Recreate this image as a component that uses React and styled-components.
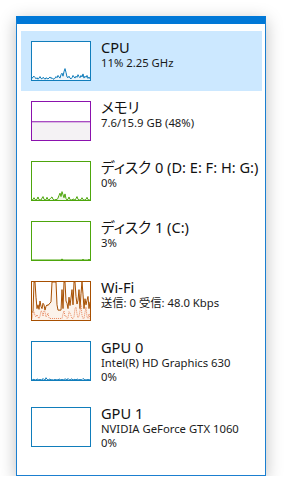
import styled, { createGlobalStyle } from 'styled-components';

const GlobalStyle = createGlobalStyle`
    html, body {
        margin: 0;
        padding: 0;
        background: #ffffff;
    }
    body {
        font-family: "Noto Sans", "Noto Sans CJK JP", sans-serif;
        font-feature-settings: "palt";
        color: #000;
    }
`

const Window = styled.div`
    margin: 16px 0 0 16px;
    width: 241px;
    border: 1px solid #1b7fd0;
    border-top: 8px solid #0078d7;
    background: #fff;
    box-shadow: 0 4px 16px rgba(0, 0, 0, 0.26);
    padding: 7px 3px 12px 4px;
`

const List = styled.div`
    display: flex;
    flex-direction: column;
`

const Row = styled.div`
    display: flex;
    align-items: flex-start;
    gap: 10px;
    padding: 10px;
    min-height: 40px;
    background: ${props => props.active ? '#cce8ff' : 'transparent'};
`

const GraphBox = styled.div`
    flex: none;
    width: 58px;
    height: 38px;
    border: 1px solid ${props => props.color};
    background: #fff;
    svg {
        display: block;
    }
`

const Info = styled.div`
    display: flex;
    flex-direction: column;
    margin: -3px 0 3px;
    white-space: nowrap;
`

const Title = styled.div`
    font-size: 14.6px;
    line-height: 18px;
    color: #111;
`

const Sub = styled.div`
    font-size: 11.3px;
    line-height: 14px;
    color: #1a1a1a;
`

const cpu = [4, 8, 10, 7, 3, 6, 2, 5, 9, 4, 3, 7, 5, 2, 6, 4, 3, 5, 8, 4, 6, 3, 2, 5, 9, 6, 12, 8, 5, 14, 18, 10, 22, 30, 20, 8, 6, 10, 5, 3, 6, 12, 8, 5, 10, 7, 14, 9, 6, 12, 8, 16, 5, 10, 7, 12, 4, 8, 3]
const disk0 = [0, 1, 6, 1, 0, 2, 8, 1, 0, 0, 5, 9, 2, 0, 1, 7, 1, 0, 3, 6, 8, 2, 0, 0, 2, 1, 5, 12, 18, 9, 22, 14, 6, 16, 4, 0, 2, 8, 1, 0, 0, 3, 1, 0, 4, 9, 2, 0, 0, 1, 6, 1, 0, 0, 2, 7, 1, 0, 0]
const disk1 = new Array(59).fill(0).map((_, i) => (i === 30 ? 3 : i === 51 ? 2 : i === 57 ? 2 : 0))
const gpu0 = [0, 1, 2, 0, 0, 3, 1, 0, 2, 0, 0, 4, 1, 0, 6, 2, 0, 1, 3, 0, 1, 0, 0, 2, 0, 1, 0, 3, 1, 0, 2, 0, 1, 3, 2, 0, 4, 1, 0, 2, 3, 0, 1, 2, 0, 3, 1, 0, 2, 0, 1, 4, 2, 0, 1, 0, 2, 0, 1]
const wifiRecv = [20, 22, 100, 100, 60, 30, 40, 28, 50, 36, 30, 44, 40, 26, 36, 40, 38, 42, 44, 48, 100, 100, 100, 100, 100, 40, 26, 26, 26, 26, 80, 30, 100, 100, 50, 44, 30, 60, 38, 58, 80, 40, 100, 100, 62, 42, 52, 80, 30, 70, 100, 68, 30, 56, 40, 52, 62, 30, 48]
const wifiSend = [4, 18, 22, 12, 8, 14, 8, 4, 10, 24, 22, 10, 24, 22, 8, 12, 18, 6, 4, 4, 4, 4, 4, 4, 4, 4, 4, 4, 4, 4, 4, 16, 24, 10, 10, 4, 6, 22, 18, 12, 4, 4, 8, 30, 34, 16, 6, 10, 24, 40, 12, 4, 4, 20, 34, 8, 4, 16, 4]

const toPoints = (values) => values.map((v, i) => {
    const x = (i / (values.length - 1)) * 58
    const y = 38 - (v / 100) * 38
    return `${x.toFixed(2)},${y.toFixed(2)}`
}).join(' ')

const Graph = ({ color, fill, values = [], dotted, level }) => {
    return (
        <GraphBox color={color}>
            <svg width="58" height="38" viewBox="0 0 58 38">
                {level !== undefined && (
                    <>
                        <rect x="0" y={38 - level * 38 / 100} width="58" height={level * 38 / 100} fill={fill} />
                        <line x1="0" x2="58" y1={38 - level * 38 / 100} y2={38 - level * 38 / 100} stroke={color} strokeWidth="1.2" />
                    </>
                )}
                {values.length > 0 && (
                    <>
                        <polygon points={`0,38 ${toPoints(values)} 58,38`} fill={fill} />
                        <polyline points={toPoints(values)} fill="none" stroke={color} strokeWidth="1" strokeLinejoin="round" />
                    </>
                )}
                {dotted && (
                    <polyline points={toPoints(dotted)} fill="none" stroke="#e8845a" strokeWidth="1" strokeDasharray="1 1" />
                )}
            </svg>
        </GraphBox>
    )
}

const items = [
    { title: 'CPU', lines: ['11%  2.25 GHz'], color: '#117dbb', fill: '#f1f6fa', values: cpu, active: true },
    { title: 'メモリ', lines: ['7.6/15.9 GB (48%)'], color: '#8b12ae', fill: '#f4f2f4', level: 48 },
    { title: 'ディスク 0 (D: E: F: H: G:)', lines: ['0%'], color: '#4da60c', fill: '#eff7e7', values: disk0 },
    { title: 'ディスク 1 (C:)', lines: ['3%'], color: '#4da60c', fill: '#eff7e7', values: disk1 },
    { title: 'Wi-Fi', lines: ['送信: 0 受信: 48.0 Kbps'], color: '#a74f01', fill: '#fcf3eb', values: wifiRecv, dotted: wifiSend },
    { title: 'GPU 0', lines: ['Intel(R) HD Graphics 630', '0%'], color: '#117dbb', fill: '#f1f6fa', values: gpu0 },
    { title: 'GPU 1', lines: ['NVIDIA GeForce GTX 1060', '0%'], color: '#117dbb', fill: '#f1f6fa', values: [] },
]

export default function App() {
    return (
        <>
            <GlobalStyle />
            <Window>
                <List>
                    {items.map((d, index) => (
                        <Row key={index} active={d.active}>
                            <Graph color={d.color} fill={d.fill} values={d.values} dotted={d.dotted} level={d.level} />
                            <Info>
                                <Title>{d.title}</Title>
                                {d.lines.map((l, i) => <Sub key={i}>{l}</Sub>)}
                            </Info>
                        </Row>
                    ))}
                </List>
            </Window>
        </>
    )
}
